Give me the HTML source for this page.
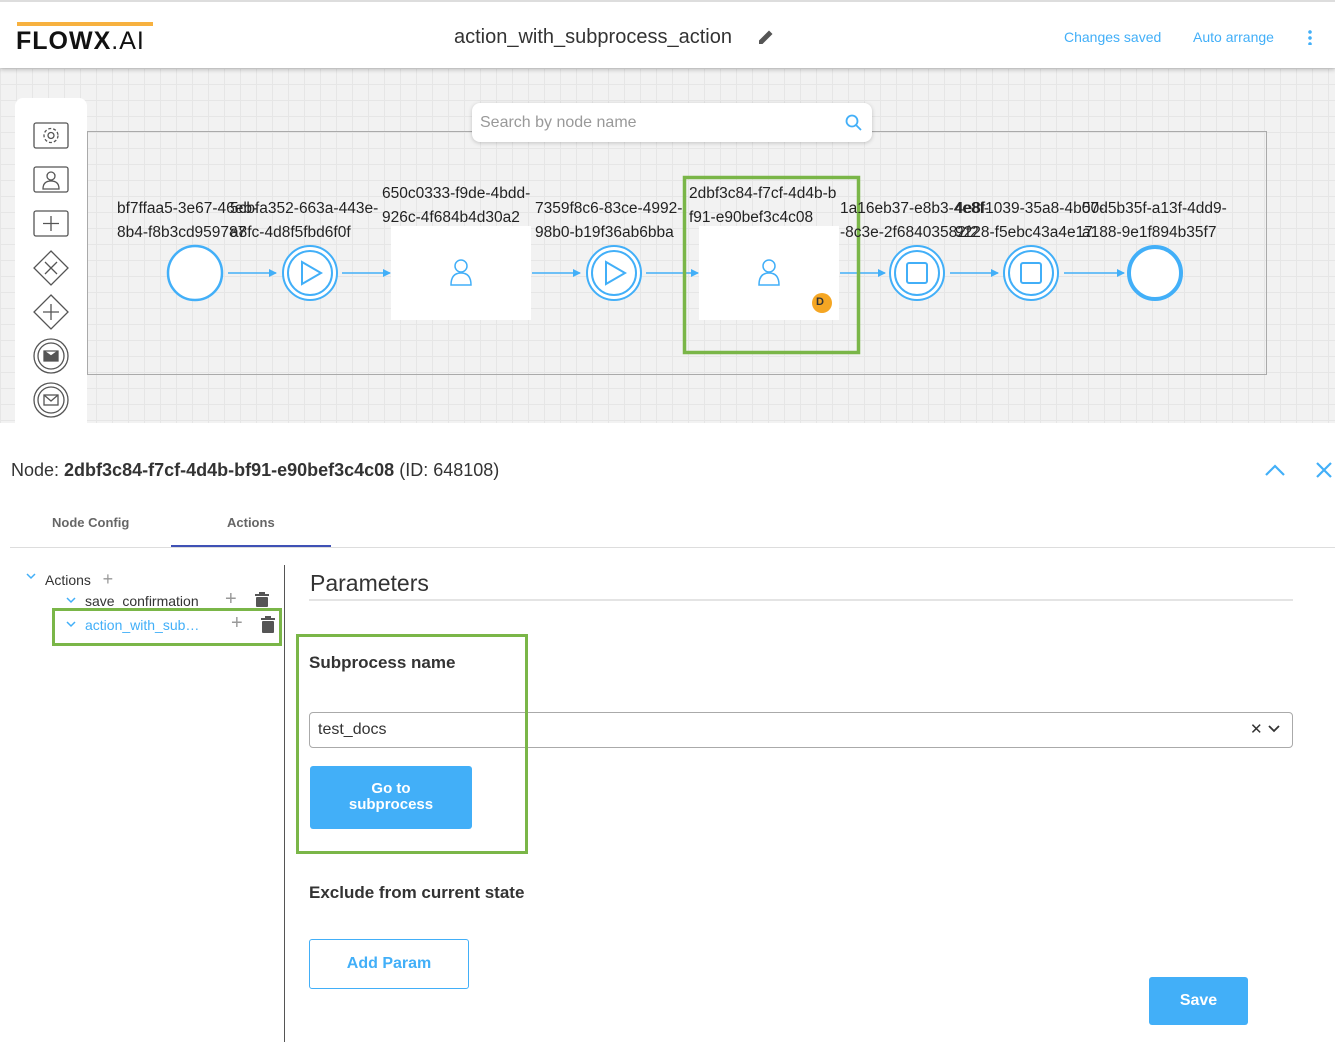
<!DOCTYPE html>
<html><head><meta charset="utf-8"><style>
*{margin:0;padding:0;box-sizing:border-box}
body{width:1335px;height:1042px;position:relative;background:#fff;font-family:"Liberation Sans",Arial,sans-serif;overflow:hidden}
.a{position:absolute}
.lbl{position:absolute;font-size:15.5px;color:#222;line-height:24px;white-space:nowrap}
</style></head><body>
<div class="a" style="left:0;top:0;width:1335px;height:68px;background:#fff;border-top:2px solid #ddd;box-shadow:0 2px 4px rgba(0,0,0,.2);z-index:2">
 <div class="a" style="left:17px;top:20px;width:136px;height:4px;background:#f7b13f"></div>
 <div class="a" style="left:16px;top:25px;font-size:25px;font-weight:bold;letter-spacing:1px;color:#111">FLOWX<span style="font-weight:normal">.AI</span></div>
 <div class="a" style="left:454px;top:24px;font-size:20px;color:#333">action_with_subprocess_action</div>
 <svg class="a" style="left:757px;top:26px" width="18" height="18" viewBox="0 0 18 18"><path d="M2 16 L2 12.5 L12 2.5 L15.5 6 L5.5 16 Z" fill="#555"/></svg>
 <div class="a" style="left:1064px;top:27px;font-size:14px;color:#42aff8">Changes saved</div>
 <div class="a" style="left:1193px;top:27px;font-size:14px;color:#42aff8">Auto arrange</div>
 <div class="a" style="left:1308px;top:27px;width:4px;height:16px;background:radial-gradient(circle,#42aff8 1.6px,transparent 2px) 0 0/4px 6px"></div>
</div>
<div class="a" style="left:0;top:68px;width:1335px;height:355px;background-color:#f2f2f2;background-image:linear-gradient(#e6e6e6 1px,transparent 1px),linear-gradient(90deg,#e6e6e6 1px,transparent 1px);background-size:16px 16px"></div>
<div class="a" style="left:87px;top:131px;width:1180px;height:244px;border:1.5px solid #aaa"></div>
<div class="a" style="left:15px;top:98px;width:72px;height:325px;background:#fff;border-radius:8px 8px 0 0"></div>
<svg class="a" style="left:30px;top:120px" width="44" height="300" viewBox="0 0 44 300" fill="none" stroke="#555" stroke-width="1.3">
 <rect x="4" y="3" width="34" height="25" rx="2"/><circle cx="21" cy="15.5" r="3"/><circle cx="21" cy="15.5" r="7" stroke-dasharray="3 2"/>
 <rect x="4" y="47" width="34" height="25" rx="2"/><circle cx="21" cy="56" r="4"/><path d="M13 69 Q13 61 21 61 Q29 61 29 69 Z"/>
 <rect x="4" y="91" width="34" height="25" rx="2"/><path d="M21 96V111M13 103.5H29"/>
 <path d="M21 131L38 148L21 165L4 148Z M15 142L27 154M27 142L15 154"/>
 <path d="M21 175L38 192L21 209L4 192Z M21 184V200M13 192H29"/>
 <circle cx="21" cy="236" r="17"/><circle cx="21" cy="236" r="13"/><path d="M14 231h14v10h-14z M14 231L21 236L28 231" fill="#555" stroke="#555"/>
 <circle cx="21" cy="280" r="17"/><circle cx="21" cy="280" r="13"/><rect x="14" y="275" width="14" height="10"/><path d="M14 275L21 281L28 275"/>
</svg>
<div class="a" style="left:472px;top:103px;width:400px;height:39px;background:#fff;border-radius:8px;box-shadow:0 1px 4px rgba(0,0,0,.2)">
 <div class="a" style="left:8px;top:11px;font-size:16px;color:#999">Search by node name</div>
 <svg class="a" style="left:373px;top:11px" width="18" height="18" fill="none" stroke="#42aff8" stroke-width="1.8"><circle cx="7" cy="7" r="5.5"/><path d="M11 11L16 16"/></svg>
</div>
<div class="a" style="left:391px;top:226px;width:140px;height:94px;background:#fff"></div>
<div class="a" style="left:699px;top:226px;width:140px;height:94px;background:#fff"></div>
<svg class="a" style="left:0;top:0" width="1335" height="423" fill="none" stroke="#42aff8">
 <defs><marker id="m" markerWidth="8" markerHeight="8" refX="7" refY="4" orient="auto" markerUnits="userSpaceOnUse"><path d="M0 0L8 4L0 8Z" fill="#42aff8" stroke="none"/></marker></defs>
 <g stroke-width="1.5">
 <line x1="228" y1="273" x2="276" y2="273" marker-end="url(#m)"/>
 <line x1="342" y1="273" x2="390" y2="273" marker-end="url(#m)"/>
 <line x1="532" y1="273" x2="580" y2="273" marker-end="url(#m)"/>
 <line x1="646" y1="273" x2="698" y2="273" marker-end="url(#m)"/>
 <line x1="840" y1="273" x2="885" y2="273" marker-end="url(#m)"/>
 <line x1="950" y1="273" x2="998" y2="273" marker-end="url(#m)"/>
 <line x1="1064" y1="273" x2="1124" y2="273" marker-end="url(#m)"/>
 </g>
 <circle cx="195" cy="273" r="27" stroke-width="2.5" fill="#fff"/>
 <g stroke-width="2" fill="#fff"><circle cx="310" cy="273" r="27"/><circle cx="310" cy="273" r="22"/><circle cx="614" cy="273" r="27"/><circle cx="614" cy="273" r="22"/>
 <circle cx="917" cy="273" r="27"/><circle cx="917" cy="273" r="22"/><circle cx="1031" cy="273" r="27"/><circle cx="1031" cy="273" r="22"/></g>
 <g stroke-width="2"><path d="M302 262V284L321 273Z M606 262V284L625 273Z"/><rect x="907" y="263" width="20" height="20" rx="2"/><rect x="1021" y="263" width="20" height="20" rx="2"/></g>
 <circle cx="1155" cy="273" r="26" stroke-width="4" fill="#fff"/>
 <g stroke-width="1.5"><circle cx="461" cy="266" r="6"/><path d="M451 285Q451 273 461 273Q471 273 471 285Z"/><circle cx="769" cy="266" r="6"/><path d="M759 285Q759 273 769 273Q779 273 779 285Z"/></g>
 <circle cx="822" cy="303" r="10" fill="#f5a623" stroke="none"/>
 <rect x="684.5" y="177.5" width="174" height="175" stroke="#7ab648" stroke-width="3.5"/>
</svg>
<div class="a" style="left:816px;top:296px;font-size:11px;font-weight:bold;color:#333">D</div>
<div class="lbl" style="left:117px;top:197px">bf7ffaa5-3e67-46eb-<br>8b4-f8b3cd959787</div>
<div class="lbl" style="left:230px;top:197px">5cbfa352-663a-443e-<br>a8fc-4d8f5fbd6f0f</div>
<div class="lbl" style="left:382px;top:182px">650c0333-f9de-4bdd-<br>926c-4f684b4d30a2</div>
<div class="lbl" style="left:535px;top:197px">7359f8c6-83ce-4992-<br>98b0-b19f36ab6bba</div>
<div class="lbl" style="left:689px;top:182px">2dbf3c84-f7cf-4d4b-b<br>f91-e90bef3c4c08</div>
<div class="lbl" style="left:840px;top:197px">1a16eb37-e8b3-4e8f-<br>-8c3e-2f68403582f2</div>
<div class="lbl" style="left:955px;top:197px">4e8f1039-35a8-4b07-<br>9228-f5ebc43a4e17</div>
<div class="lbl" style="left:1082px;top:197px">50d5b35f-a13f-4dd9-<br>a188-9e1f894b35f7</div>
<div class="a" style="left:11px;top:460px;font-size:18px;color:#333">Node: <b>2dbf3c84-f7cf-4d4b-bf91-e90bef3c4c08</b> (ID: 648108)</div>
<svg class="a" style="left:1263px;top:460px" width="72" height="22" fill="none" stroke="#42aff8" stroke-width="2.2"><path d="M3 15L12 6L21 15"/><path d="M54 3L68 17M68 3L54 17"/></svg>
<div class="a" style="left:52px;top:515px;font-size:13px;color:#666;font-weight:bold">Node Config</div>
<div class="a" style="left:227px;top:515px;font-size:13px;color:#666;font-weight:bold">Actions</div>
<div class="a" style="left:10px;top:547px;width:1325px;height:1px;background:#ddd"></div>
<div class="a" style="left:171px;top:545px;width:160px;height:2px;background:#3f51b5"></div>
<div class="a" style="left:284px;top:565px;width:1px;height:477px;background:#555"></div>
<svg class="a" style="left:26px;top:572px" width="60" height="60" fill="none" stroke="#42aff8" stroke-width="1.5"><path d="M1 2L5 6L9 2"/><path d="M41 26L45 30L49 26"/><path d="M41 50L45 54L49 50"/></svg>
<div class="a" style="left:45px;top:569px;font-size:14px;color:#333">Actions &nbsp;&nbsp;<span style="color:#999;font-size:18px">+</span></div>
<div class="a" style="left:85px;top:593px;font-size:14px;color:#333">save_confirmation</div>
<div class="a" style="left:85px;top:617px;font-size:14px;color:#42aff8">action_with_sub…</div>
<div class="a" style="left:225px;top:588px;font-size:20px;color:#999">+</div>
<div class="a" style="left:231px;top:612px;font-size:20px;color:#999">+</div>
<svg class="a" style="left:254px;top:592px" width="30" height="44" fill="#555"><rect x="1" y="2" width="14" height="2"/><rect x="5" y="0" width="6" height="3"/><rect x="2" y="5" width="12" height="10" rx="1"/><rect x="7" y="26" width="14" height="2"/><rect x="11" y="24" width="6" height="3"/><rect x="8" y="29" width="12" height="12" rx="1"/></svg>
<div class="a" style="left:51.5px;top:607.5px;width:230px;height:38px;border:3.5px solid #7ab648"></div>
<div class="a" style="left:310px;top:570px;font-size:23px;color:#333">Parameters</div>
<div class="a" style="left:309px;top:599px;width:984px;height:2px;background:#e4e4e4"></div>
<div class="a" style="left:309px;top:712px;width:984px;height:36px;border:1px solid #aaa;border-radius:4px"></div>
<div class="a" style="left:318px;top:721px;font-size:16px;color:#333">test_docs</div>
<div class="a" style="left:1250px;top:720px;font-size:15px;color:#333">✕</div>
<svg class="a" style="left:1267px;top:724px" width="14" height="10" fill="none" stroke="#333" stroke-width="1.8"><path d="M2 2L7 7L12 2"/></svg>
<div class="a" style="left:295.5px;top:633.5px;width:232px;height:220px;border:3.5px solid #7ab648"></div>
<div class="a" style="left:309px;top:653px;font-size:17px;font-weight:bold;color:#333">Subprocess name</div>
<div class="a" style="left:310px;top:766px;width:162px;height:63px;background:#42aff8;border-radius:3px;color:#fff;font-weight:bold;font-size:15px;text-align:center;padding-top:15px;line-height:16px">Go to<br>subprocess</div>
<div class="a" style="left:309px;top:883px;font-size:17px;font-weight:bold;color:#333">Exclude from current state</div>
<div class="a" style="left:309px;top:939px;width:160px;height:50px;border:1px solid #42aff8;border-radius:3px;color:#42aff8;font-weight:bold;font-size:16px;text-align:center;line-height:48px">Add Param</div>
<div class="a" style="left:1149px;top:977px;width:99px;height:48px;background:#42aff8;border-radius:3px;color:#fff;font-weight:bold;font-size:16px;text-align:center;line-height:48px">Save</div>
</body></html>
